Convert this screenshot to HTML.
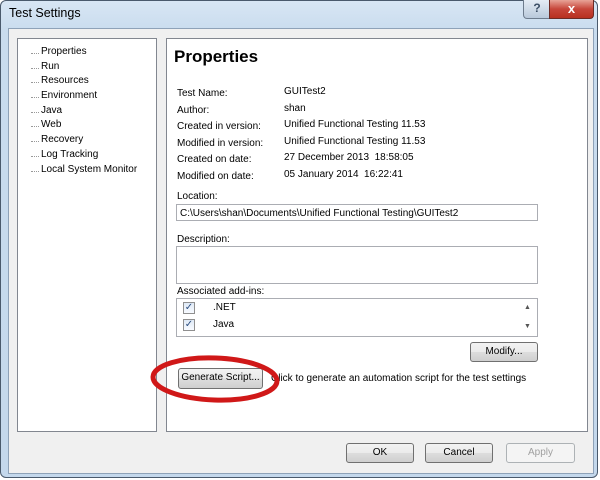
<!DOCTYPE html>
<html><head><style>
body{margin:0;width:600px;height:480px;overflow:hidden;background:#fff;font-family:"Liberation Sans",sans-serif;font-size:10px;color:#000}
.a{position:absolute}
.win{left:0;top:0;width:598px;height:478px;border:1px solid #4a5a6c;border-radius:6px;background:linear-gradient(#d8e6f4,#c9dcee 30px,#c4d8ec);box-sizing:border-box}
.body{left:8px;top:28px;width:584px;height:444px;background:#f0f0f0;border:1px solid #8ea2b8}
.panel{background:#fff;border:1px solid #828790}
.btn{border:1px solid #707070;border-radius:3px;background:linear-gradient(#f2f2f2,#ebebeb 50%,#dddddd 51%,#cfcfcf);text-align:center;line-height:18px;font-size:10px;white-space:nowrap}
.inp{background:#fff;border:1px solid #abadb3}
.t{white-space:nowrap}
.tree div{height:14.7px;position:relative;padding-left:10px;white-space:nowrap}
.tree div:before{content:"";position:absolute;left:0;top:7px;width:8px;border-top:1px dotted #999}
.cb{width:10px;height:10px;border:1px solid #8f8f8f;background:linear-gradient(#dfe9f5,#f8fbff);font-size:10px;line-height:10px;text-align:center;color:#2a4c7f}
</style></head><body>
<div class="a win"></div>
<div class="a t" style="left:9px;top:6px;font-size:12.5px">Test Settings</div>
<div class="a" style="left:523px;top:0;width:26px;height:18px;border:1px solid #6d7c8d;border-top:none;border-radius:0 0 0 4px;background:linear-gradient(#e4ecf5,#b9c9db);text-align:center;font-size:12px;color:#3c4f66;font-weight:bold;line-height:17px">?</div>
<div class="a" style="left:549px;top:0;width:43px;height:18px;border:1px solid #6d2b25;border-top:none;border-radius:0 0 4px 0;background:linear-gradient(#e8a397,#c7463a 50%,#b8301f);text-align:center;font-size:13px;color:#fff;font-weight:bold;line-height:17px">x</div>
<div class="a body"></div>
<div class="a panel" style="left:17px;top:38px;width:138px;height:392px"></div>
<div class="a tree" style="left:31px;top:46px;width:120px">
<div>Properties</div><div>Run</div><div>Resources</div><div>Environment</div><div>Java</div><div>Web</div><div>Recovery</div><div>Log Tracking</div><div>Local System Monitor</div></div>
<div class="a panel" style="left:166px;top:38px;width:420px;height:392px"></div>
<div class="a t" style="left:174px;top:47px;font-size:17px;font-weight:bold">Properties</div>
<div class="a t" style="left:177px;top:86px;line-height:16.6px">Test Name:<br>Author:<br>Created in version:<br>Modified in version:<br>Created on date:<br>Modified on date:</div>
<div class="a t" style="left:284px;top:84px;line-height:16.6px">GUITest2<br>shan<br>Unified Functional Testing 11.53<br>Unified Functional Testing 11.53<br>27 December 2013&nbsp; 18:58:05<br>05 January 2014&nbsp; 16:22:41</div>
<div class="a t" style="left:177px;top:191px">Location:</div>
<div class="a inp t" style="left:176px;top:204px;height:17px;line-height:17px;padding-left:3px;box-sizing:border-box;width:362px">C:\Users\shan\Documents\Unified Functional Testing\GUITest2</div>
<div class="a t" style="left:177px;top:234px">Description:</div>
<div class="a inp" style="left:176px;top:246px;width:360px;height:36px"></div>
<div class="a t" style="left:177px;top:286px">Associated add-ins:</div>
<div class="a inp" style="left:176px;top:298px;width:360px;height:37px"></div>
<div class="a cb" style="left:183px;top:302px">✓</div>
<div class="a cb" style="left:183px;top:319px">✓</div>
<div class="a t" style="left:213px;top:302px">.NET</div>
<div class="a t" style="left:213px;top:319px">Java</div>
<div class="a" style="left:524px;top:304px;font-size:7px;color:#555">▲</div>
<div class="a" style="left:524px;top:323px;font-size:7px;color:#555">▼</div>
<div class="a btn" style="left:470px;top:342px;width:66px;height:18px">Modify...</div>
<div class="a btn" style="left:178px;top:368px;width:83px;height:19px">Generate Script...</div>
<div class="a t" style="left:271px;top:373px">Click to generate an automation script for the test settings</div>
<svg class="a" style="left:0;top:0" width="600" height="480"><ellipse cx="215" cy="379" rx="62" ry="21" fill="none" stroke="#d01818" stroke-width="5" transform="rotate(2 215 379)"/></svg>
<div class="a btn" style="left:346px;top:443px;width:66px;height:18px">OK</div>
<div class="a btn" style="left:425px;top:443px;width:66px;height:18px">Cancel</div>
<div class="a btn" style="left:506px;top:443px;width:67px;height:18px;border-color:#adb2b5;background:#f4f4f4;color:#a0a0a0">Apply</div>
</body></html>
